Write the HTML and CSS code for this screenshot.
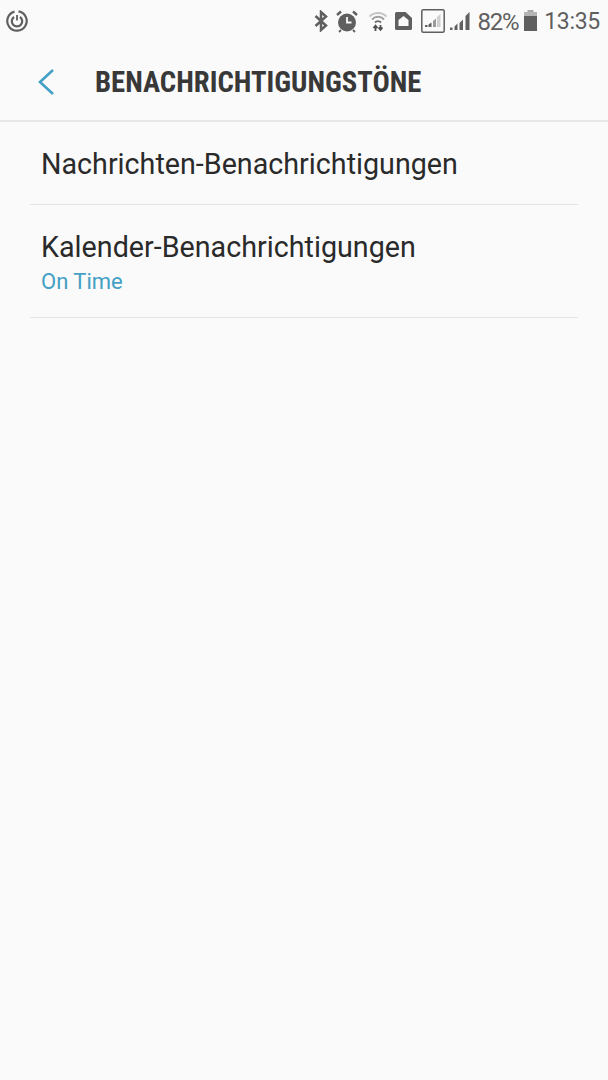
FILE: index.html
```html
<!DOCTYPE html>
<html lang="de">
<head>
<meta charset="utf-8">
<title>Benachrichtigungstöne</title>
<link rel="stylesheet" href="styles.css">
</head>
<body>
<div class="screen">
  <div class="status">
    <svg class="ic-sync" width="24" height="24" viewBox="0 0 24 24" fill="none" stroke="#5f5f5f">
      <path d="M13.500 2.400A9.700 9.700 0 1 1 9.500 2.600" stroke-width="2.200"/>
      <path d="M9 8a5.200 5.200 0 1 0 6 0" stroke-width="2.200"/>
      <path d="M12 6v5.500" stroke-width="1.800"/>
    </svg>
    <div class="status-right">
      <svg class="i-bt" width="14" height="22" viewBox="0 0 14 22" fill="none" stroke="#5f5f5f" stroke-width="2.500"><path d="M1.500 6 12 15.500 7 20V2l5 4.500L1.500 16"/></svg>
      <svg class="i-alarm" width="22" height="24" viewBox="0 0 22 24"><circle cx="11" cy="13.500" r="9" fill="#5f5f5f"/><path d="M11 8v5.500h4.500" fill="none" stroke="#fafafa" stroke-width="1.800"/><path d="M1 6 5 2.500M21 6l-4-3.500" stroke="#5f5f5f" stroke-width="2.400"/><path d="M5 21l-2 2M17 21l2 2" stroke="#5f5f5f" stroke-width="1.800"/></svg>
      <svg class="i-wifi" width="18" height="22" viewBox="0 0 18 22" fill="none"><path d="M.500 6.500a12 12 0 0 1 17 0" stroke="#c4c4c4" stroke-width="1.900"/><path d="M3 9.500a8 8 0 0 1 12 0" stroke="#a0a0a0" stroke-width="1.900"/><path d="M6 12.500a4 4 0 0 1 6 0" stroke="#6a6a6a" stroke-width="1.900"/><path d="M6.500 21v-5M4.500 18l2-2.400 2 2.400M11.500 15v5M9.500 17.500l2 2.400 2-2.400" stroke="#4f4f4f" stroke-width="1.800"/></svg>
      <svg class="i-sim" width="17" height="18" viewBox="0 0 17 18"><path d="M1.500 0h9L17 6v10.500a1.500 1.500 0 0 1-1.500 1.500h-14A1.500 1.500 0 0 1 0 16.500v-15A1.500 1.500 0 0 1 1.500 0z" fill="#5f5f5f"/><path d="M3.500 14V8l5-4 5 4v6z" fill="#fafafa"/></svg>
      <svg class="i-box" width="24" height="24" viewBox="0 0 24 24" fill="none"><rect x=".8" y=".8" width="22.400" height="22.400" rx="1.500" stroke="#5f5f5f" stroke-width="1.500"/><path d="M4 18h2.500v-2H4zM7.500 18H10.500v-4.500l-3 2z" fill="#5f5f5f"/><path d="M12 18h3V9.500l-3 2.500z" fill="#9a9a9a"/><path d="M16 18h3.500V5l-3.500 3z" fill="#cfcfcf"/></svg>
      <svg class="i-sig" width="20" height="20" viewBox="0 0 20 20"><path d="M0 19h2.500v-2.500H0zM4.500 19H7.500v-6.500l-3 3zM9.500 19h3.500V8.500l-3.500 3.500zM15.500 19H19.500V1l-4 4z" fill="#5f5f5f"/></svg>
      <span class="pct">82%</span>
      <svg class="i-batt" width="15" height="21" viewBox="0 0 15 21"><path d="M4.500 0h6v2h-6z" fill="#a8a8a8"/><path d="M1 2h13v4H1z" fill="#b5b5b5"/><path d="M1 6h13v15H1z" fill="#5f5f5f"/></svg>
      <span class="time">13:35</span>
    </div>
  </div>
  <header class="bar">
    <svg class="back" width="18" height="28" viewBox="0 0 18 28" fill="none"><path d="M16 2 3 14l13 12" stroke="#43a0c4" stroke-width="2.600"/></svg>
    <h1 class="title">BENACHRICHTIGUNGSTÖNE</h1>
  </header>
  <ul class="list">
    <li class="row row-one"><span class="label">Nachrichten-Benachrichtigungen</span></li>
    <li class="row row-two"><span class="label">Kalender-Benachrichtigungen</span><span class="sub">On Time</span></li>
  </ul>
</div>
</body>
</html>
```
FILE: styles.css
```css
* { box-sizing: border-box; }
html, body { margin: 0; padding: 0; }
body { background: #fafafa; font-family: Roboto, "Liberation Sans", sans-serif; }
.screen { width: 608px; height: 1080px; background: #fafafa; overflow: hidden; }
.status { height: 43px; display: flex; align-items: center; justify-content: space-between; padding: 0 8px 2px 5px; }
.status-right { display: flex; align-items: center; }
.status svg { display: block; flex: none; }
.i-bt { margin-right: 8px; }
.i-alarm { margin-right: 11px; }
.i-wifi { margin-right: 8px; }
.i-sim { margin-right: 9px; }
.i-box { margin-right: 5px; }
.i-sig { margin-right: 8px; }
.pct { font-size: 24px; color: #5f5f5f; line-height: 28px; letter-spacing: -1.300px; padding-top: 2px; }
.time { font-size: 23px; color: #5f5f5f; line-height: 28px; letter-spacing: -0.300px; padding-top: 2px; }
.i-batt { margin: 0 6px 0 5px; }
.bar { height: 79px; display: flex; align-items: center; padding: 0 0 0 37px; border-bottom: 2px solid #e6e6e6; }
.title { margin: 0 0 0 40px; font-size: 28.700px; font-weight: 700; font-stretch: condensed; color: #383838; white-space: nowrap; }
.list { list-style: none; margin: 0 30px; padding: 0; }
.row { border-bottom: 1px solid #e4e4e4; display: flex; flex-direction: column; padding-left: 11px; }
.row-one { height: 83px; justify-content: center; padding-top: 2px; }
.row-two { height: 113px; padding-top: 25px; }
.label { font-size: 28.700px; line-height: 34px; color: #2a2a2a; }
.sub { font-size: 22px; line-height: 26px; color: #43a0c4; margin-top: 5px; }
```
